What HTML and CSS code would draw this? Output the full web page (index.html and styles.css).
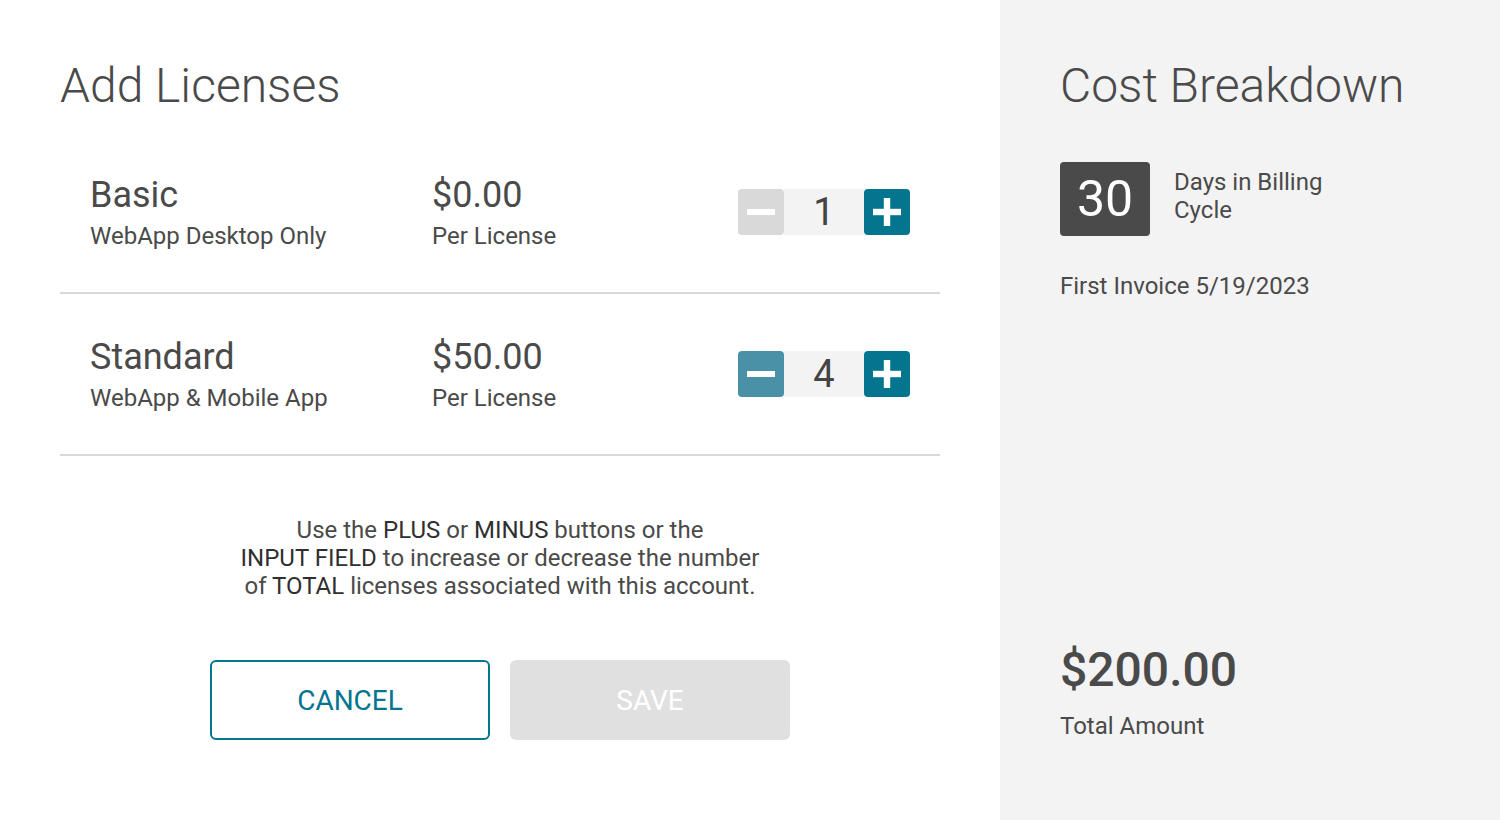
FILE: index.html
```html
<!DOCTYPE html>
<html lang="en">
<head>
<meta charset="utf-8">
<title>Add Licenses</title>
<link rel="stylesheet" href="styles.css">
</head>
<body>
<div class="modal">
  <section class="main">
    <h1 class="title">Add Licenses</h1>
    <div class="rows">
      <div class="row">
        <div class="col name-col">
          <div class="big">Basic</div>
          <div class="small">WebApp Desktop Only</div>
        </div>
        <div class="col price-col">
          <div class="big">$0.00</div>
          <div class="small">Per License</div>
        </div>
        <div class="stepper">
          <button class="step minus disabled" aria-label="minus">
            <svg width="46" height="46" viewBox="0 0 46 46"><rect x="9" y="20" width="28" height="6" fill="#fff"/></svg>
          </button>
          <div class="qty">1</div>
          <button class="step plus" aria-label="plus">
            <svg width="46" height="46" viewBox="0 0 46 46"><rect x="9" y="19.8" width="28" height="6.4" fill="#fff"/><rect x="19.8" y="9" width="6.4" height="28" fill="#fff"/></svg>
          </button>
        </div>
      </div>
      <div class="row">
        <div class="col name-col">
          <div class="big">Standard</div>
          <div class="small">WebApp &amp; Mobile App</div>
        </div>
        <div class="col price-col">
          <div class="big">$50.00</div>
          <div class="small">Per License</div>
        </div>
        <div class="stepper">
          <button class="step minus" aria-label="minus">
            <svg width="46" height="46" viewBox="0 0 46 46"><rect x="9" y="20" width="28" height="6" fill="#fff"/></svg>
          </button>
          <div class="qty">4</div>
          <button class="step plus" aria-label="plus">
            <svg width="46" height="46" viewBox="0 0 46 46"><rect x="9" y="19.8" width="28" height="6.4" fill="#fff"/><rect x="19.8" y="9" width="6.4" height="28" fill="#fff"/></svg>
          </button>
        </div>
      </div>
    </div>
    <p class="hint">Use the <b>PLUS</b> or <b>MINUS</b> buttons or the<br><b>INPUT FIELD</b> to increase or decrease the number<br>of <b>TOTAL</b> licenses associated with this account.</p>
    <div class="actions">
      <button class="btn cancel">CANCEL</button>
      <button class="btn save">SAVE</button>
    </div>
  </section>
  <aside class="side">
    <h2 class="title">Cost Breakdown</h2>
    <div class="days">
      <div class="days-box">30</div>
      <div class="days-label">Days in Billing<br>Cycle</div>
    </div>
    <div class="invoice">First Invoice 5/19/2023</div>
    <div class="total">
      <div class="total-amount">$200.00</div>
      <div class="total-label">Total Amount</div>
    </div>
  </aside>
</div>
</body>
</html>
```
FILE: styles.css
```css
* { box-sizing: border-box; }
html, body {
  margin: 0;
  padding: 0;
  width: 1500px;
  height: 820px;
  overflow: hidden;
  background: #ffffff;
  font-family: Roboto, "Liberation Sans", Arial, sans-serif;
  color: #4a4a4a;
}
.modal {
  display: flex;
  width: 1500px;
  height: 820px;
}
.main {
  width: 1000px;
  padding: 58px 60px 0 60px;
  background: #ffffff;
  display: flex;
  flex-direction: column;
}
.side .title { margin-top: -2px; }
.title {
  margin: 0;
  font-size: 48px;
  line-height: 56px;
  font-weight: 300;
  color: #4a4a4a;
}
.rows {
  margin-top: 18px;
}
.row {
  display: flex;
  align-items: center;
  height: 162px;
  padding: 0 30px;
  border-bottom: 2px solid #d9d9d9;
}
.col {
  display: flex;
  flex-direction: column;
}
.name-col { width: 342px; }
.price-col { flex: 1; }
.big {
  font-size: 36px;
  line-height: 44px;
  color: #4a4a4a;
}
.small {
  margin-top: 3px;
  font-size: 24px;
  line-height: 32px;
  color: #4a4a4a;
}
.stepper {
  display: flex;
  height: 46px;
}
.step {
  width: 46px;
  height: 46px;
  border: 0;
  padding: 0;
  margin: 0;
  border-radius: 4px;
  display: flex;
  align-items: center;
  justify-content: center;
  cursor: pointer;
}
.step svg { display: block; }
.minus { background: #4a91a8; }
.minus.disabled { background: #d9d9d9; }
.plus { background: #03758f; }
.qty {
  width: 80px;
  height: 46px;
  background: #f3f3f3;
  font-size: 38px;
  line-height: 46px;
  text-align: center;
  color: #444444;
}
.hint {
  margin: 60px 0 0 0;
  text-align: center;
  font-size: 24px;
  line-height: 28px;
  color: #4a4a4a;
}
.hint b {
  font-weight: 400;
  color: #2f2f2f;
}
.actions {
  display: flex;
  justify-content: center;
  gap: 20px;
  margin-top: 60px;
}
.btn {
  width: 280px;
  height: 80px;
  border-radius: 6px;
  font-family: Roboto, "Liberation Sans", Arial, sans-serif;
  font-size: 28px;
  font-weight: 400;
  cursor: pointer;
}
.cancel {
  background: #ffffff;
  border: 2px solid #03758f;
  color: #03758f;
}
.save {
  background: #e0e0e0;
  border: 0;
  color: #ffffff;
}
.side {
  width: 500px;
  background: #f3f3f3;
  padding: 60px 60px 80px 60px;
  display: flex;
  flex-direction: column;
}
.days {
  display: flex;
  align-items: flex-start;
  gap: 24px;
  margin-top: 48px;
}
.days-box {
  width: 90px;
  height: 74px;
  border-radius: 4px;
  background: #4a4a4a;
  color: #ffffff;
  font-size: 50px;
  line-height: 74px;
  text-align: center;
}
.days-label {
  padding-top: 6px;
  font-size: 24px;
  line-height: 28px;
}
.invoice {
  margin-top: 36px;
  font-size: 24px;
  line-height: 28px;
}
.total {
  margin-top: auto;
}
.total-amount {
  font-size: 48px;
  line-height: 56px;
  font-weight: 500;
}
.total-label {
  margin-top: 14px;
  font-size: 24px;
  line-height: 28px;
}
```
